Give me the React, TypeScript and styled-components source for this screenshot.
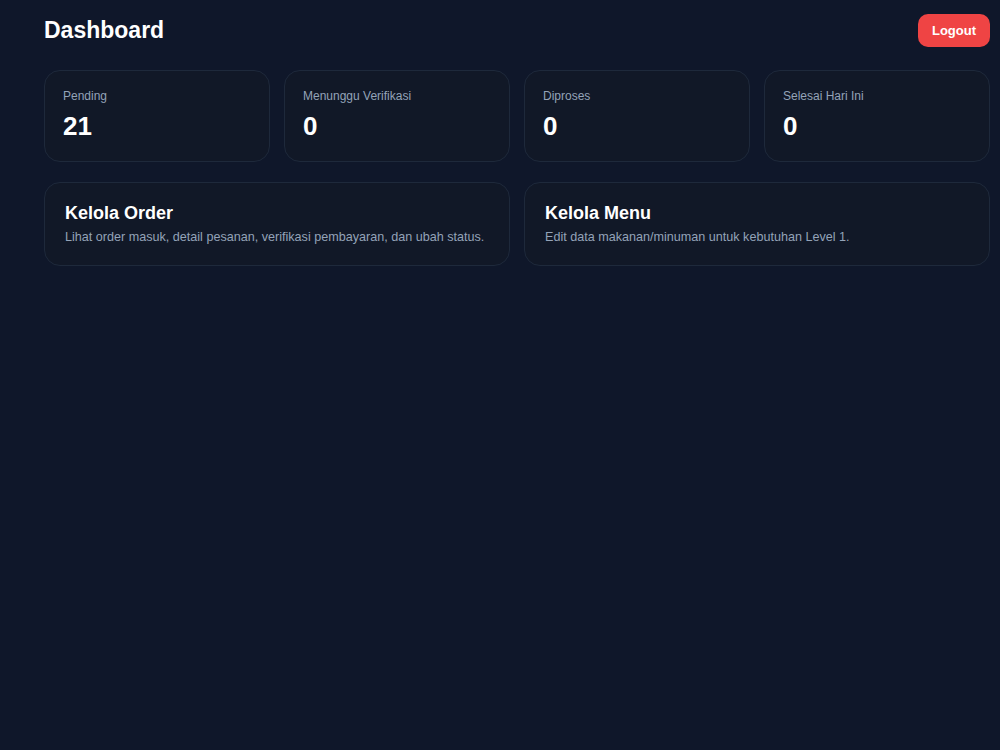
import { FC } from 'react';
import { styled, createGlobalStyle } from 'styled-components';

const GlobalStyle = createGlobalStyle`
  html, body {
    margin: 0;
    padding: 0;
    background: #0f172a;
    min-height: 100%;
  }
  body {
    font-family: "Liberation Sans", Arial, sans-serif;
    color: #f8fafc;
  }
  * {
    box-sizing: border-box;
  }
`;

const Page = styled.div`
  min-height: 750px;
  padding: 14px 10px 24px 44px;
`;

const Header = styled.div`
  display: flex;
  justify-content: space-between;
  align-items: center;
  height: 33px;
`;

const Title = styled.h1`
  margin: 0;
  font-size: 23px;
  font-weight: 700;
  color: #ffffff;
`;

const LogoutButton = styled.button`
  height: 33px;
  padding: 0 14px;
  border: none;
  border-radius: 10px;
  background: #ef4444;
  color: #ffffff;
  font-family: inherit;
  font-size: 13px;
  font-weight: 700;
  cursor: pointer;
`;

const StatGrid = styled.div`
  display: grid;
  grid-template-columns: repeat(4, 1fr);
  gap: 14px;
  margin-top: 23px;
`;

const Card = styled.div`
  background: #111827;
  border: 1px solid #1e293b;
  border-radius: 16px;
`;

const StatCard = styled(Card)`
  padding: 17px 18px 19px;
`;

const StatLabel = styled.div`
  font-size: 12px;
  line-height: 16px;
  color: #94a3b8;
`;

const StatValue = styled.div`
  margin-top: 6px;
  font-size: 26px;
  line-height: 32px;
  font-weight: 700;
  color: #ffffff;
`;

const ActionGrid = styled.div`
  display: grid;
  grid-template-columns: repeat(2, 1fr);
  gap: 14px;
  margin-top: 20px;
`;

const ActionCard = styled(Card)`
  padding: 19px 20px 19px;
  cursor: pointer;
`;

const ActionTitle = styled.div`
  font-size: 18px;
  line-height: 22px;
  font-weight: 700;
  color: #ffffff;
`;

const ActionDesc = styled.div`
  margin-top: 4px;
  font-size: 12.6px;
  line-height: 18px;
  color: #94a3b8;
`;

const stats = [
    { label: 'Pending', value: 21 },
    { label: 'Menunggu Verifikasi', value: 0 },
    { label: 'Diproses', value: 0 },
    { label: 'Selesai Hari Ini', value: 0 },
];

const actions = [
    { title: 'Kelola Order', desc: 'Lihat order masuk, detail pesanan, verifikasi pembayaran, dan ubah status.' },
    { title: 'Kelola Menu', desc: 'Edit data makanan/minuman untuk kebutuhan Level 1.' },
];

const App: FC = () => {
    return (
        <>
            <GlobalStyle />
            <Page>
                <Header>
                    <Title>Dashboard</Title>
                    <LogoutButton>Logout</LogoutButton>
                </Header>
                <StatGrid>
                    {stats.map((s) => (
                        <StatCard key={s.label}>
                            <StatLabel>{s.label}</StatLabel>
                            <StatValue>{s.value}</StatValue>
                        </StatCard>
                    ))}
                </StatGrid>
                <ActionGrid>
                    {actions.map((a) => (
                        <ActionCard key={a.title}>
                            <ActionTitle>{a.title}</ActionTitle>
                            <ActionDesc>{a.desc}</ActionDesc>
                        </ActionCard>
                    ))}
                </ActionGrid>
            </Page>
        </>
    );
};

export default App;
